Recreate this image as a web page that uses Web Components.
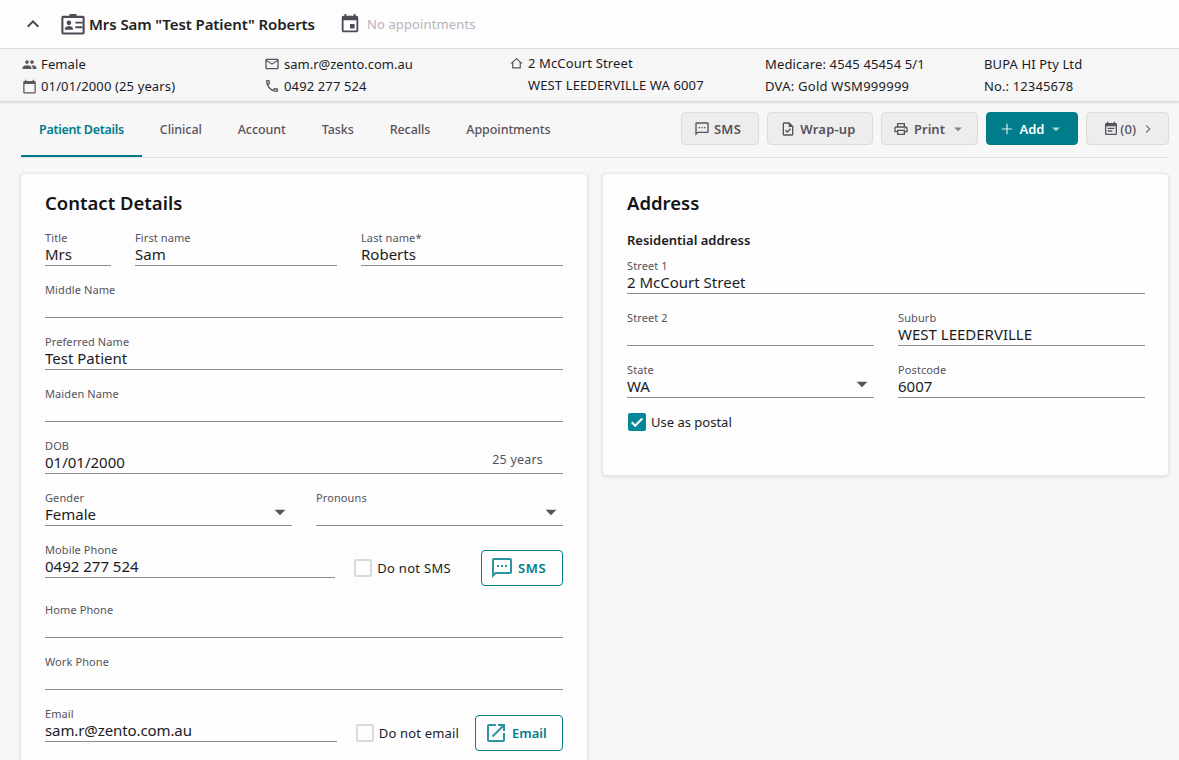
<!DOCTYPE html>
<html><head><meta charset="utf-8"><title>Patient</title>
<style>
html,body{margin:0;height:760px;overflow:hidden;background:#f7f7f7;color:#1b1b1f;font:13px "Noto Sans",sans-serif}
</style></head><body>
<patient-page></patient-page>
<script>
const P={
up:'M12 8l-6 6 1.41 1.41L12 10.83l4.59 4.58L18 14z',
event:'M17 12h-5v5h5v-5zM16 1v2H8V1H6v2H5c-1.11 0-1.99.9-1.99 2L3 19c0 1.1.89 2 2 2h14c1.1 0 2-.9 2-2V5c0-1.1-.9-2-2-2h-1V1h-2zm3 18H5V8h14v11z',
people:'M16 11c1.66 0 2.99-1.34 2.99-3S17.66 5 16 5c-1.66 0-3 1.34-3 3s1.34 3 3 3zm-8 0c1.66 0 2.99-1.34 2.99-3S9.66 5 8 5C6.34 5 5 6.34 5 8s1.34 3 3 3zm0 2c-2.33 0-7 1.17-7 3.5V19h14v-2.5c0-2.33-4.67-3.5-7-3.5zm8 0c-.29 0-.62.02-.97.05 1.16.84 1.97 1.97 1.97 3.45V19h6v-2.5c0-2.33-4.67-3.5-7-3.5z',
cal:'M20 3h-1V1h-2v2H7V1H5v2H4c-1.1 0-2 .9-2 2v16c0 1.1.9 2 2 2h16c1.1 0 2-.9 2-2V5c0-1.1-.9-2-2-2zm0 18H4V8h16v13z',
mail:'M20 4H4c-1.1 0-1.99.9-1.99 2L2 18c0 1.1.9 2 2 2h16c1.1 0 2-.9 2-2V6c0-1.1-.9-2-2-2zm0 14H4V8l8 5 8-5v10zm-8-7L4 6h16l-8 5z',
phone:'M6.54 5c.06.89.21 1.76.45 2.59l-1.2 1.2c-.41-1.2-.67-2.47-.76-3.79h1.51m9.86 12.02c.85.24 1.72.39 2.6.45v1.49c-1.32-.09-2.59-.35-3.8-.75l1.2-1.19M7.5 3H4c-.55 0-1 .45-1 1 0 9.39 7.61 17 17 17 .55 0 1-.45 1-1v-3.49c0-.55-.45-1-1-1-1.24 0-2.45-.2-3.57-.57-.1-.04-.21-.05-.31-.05-.26 0-.51.1-.71.29l-2.2 2.2c-2.83-1.45-5.15-3.76-6.59-6.59l2.2-2.2c.28-.28.36-.67.25-1.02C8.7 6.45 8.5 5.25 8.5 4c0-.55-.45-1-1-1z',
home:'M12 5.69l5 4.5V18H7v-7.81l5-4.5M12 3L2 12h3v8h14v-8h3L12 3z',
sms:'M20 2H4c-1.1 0-2 .9-2 2v18l4-4h14c1.1 0 2-.9 2-2V4c0-1.1-.9-2-2-2zm0 14H5.17L4 17.17V4h16v12zM7 9h2v2H7zm4 0h2v2h-2zm4 0h2v2h-2z',
task:'M14 2H6c-1.1 0-1.99.9-1.99 2L4 20c0 1.1.89 2 1.99 2H18c1.1 0 2-.9 2-2V8l-6-6zm4 18H6V4h7v5h5v11zm-9.18-6.95L7.4 14.46 10.94 18l5.66-5.66-1.41-1.41-4.24 4.24-2.13-2.12z',
print:'M19 8h-1V3H6v5H5c-1.66 0-3 1.34-3 3v6h4v4h12v-4h4v-6c0-1.66-1.34-3-3-3zM8 5h8v3H8V5zm8 14H8v-4h8v4zm2-4v-2H6v2H4v-4c0-.55.45-1 1-1h14c.55 0 1 .45 1 1v4h-2zm0-3.5a1 1 0 1 0 0-2 1 1 0 0 0 0 2z',
plus:'M19 12.8h-6.200v6.200h-1.600v-6.200H5v-1.600h6.200V5h1.600v6.200H19v1.600z',
note:'M17 10H7v2h10v-2zm2-7h-1V1h-2v2H8V1H6v2H5c-1.11 0-1.99.9-1.99 2L3 19c0 1.1.89 2 2 2h14c1.1 0 2-.9 2-2V5c0-1.1-.9-2-2-2zm0 16H5V8h14v11zm-5-5H7v2h7v-2z',
right:'M10 6L8.59 7.41 13.17 12l-4.58 4.59L10 18l6-6z',
open:'M19 19H5V5h7V3H5c-1.11 0-2 .9-2 2v14c0 1.1.89 2 2 2h14c1.1 0 2-.9 2-2v-7h-2v7zM14 3v2h3.59l-9.83 9.83 1.41 1.41L19 6.41V10h2V3h-7z',
caret:'M7 10l5 5 5-5z',
card:'M9 3.5h6V5h5.5A1.5 1.5 0 0 1 22 6.5v13a1.5 1.5 0 0 1-1.5 1.5h-17A1.5 1.5 0 0 1 2 19.500v-13A1.500 1.500 0 0 1 3.500 5H9zM3.800 6.800v12.400h16.400V6.800zM8.500 9a2 2 0 1 1 0 4 2 2 0 0 1 0-4zM5 17v-1c0-1.300 2.300-2.200 3.500-2.200S12 14.700 12 16v1zM14 10h6v1.600h-6zM14 14h6v1.600h-6z'
};
const ic=(n,s,c)=>`<svg width="${s}" height="${s}" viewBox="0 0 24 24" style="flex:none;display:block" fill="${c||'currentColor'}" fill-rule="evenodd"><path d="${P[n]}"/></svg>`;
const def=(name,css,html)=>customElements.define(name,class extends HTMLElement{
  connectedCallback(){ if(this.shadowRoot)return; const r=this.attachShadow({mode:'open'});
    r.innerHTML=`<style>${css}</style>`+(typeof html==='function'?html(this):html); }
});
const a=(e,k,d='')=>e.getAttribute(k)??d;

def('info-item',`:host{display:flex;align-items:center;height:22px;white-space:nowrap;font-size:13px;letter-spacing:.13px;color:#1b1b1f}
 .i{width:19px;flex:none;color:#5b5660}
 .n{margin-left:-1px;width:20px}
 :host([plain]) .i{display:none}`,
 e=>`<span class="i ${a(e,'nudge')?'n':''}">${e.hasAttribute('icon')?ic(a(e,'icon'),a(e,'isize',15)):''}</span><slot></slot>`);

def('tool-button',`:host{display:inline-flex;align-items:center;justify-content:center;box-sizing:border-box;height:33px;gap:4px;border:1px solid #dcdcdc;border-radius:4px;background:#ededed;color:#57525c;font-size:13px;font-weight:600;white-space:nowrap}
 :host([primary]){background:#007c8a;border-color:#007c8a;color:#fff}
 .c{margin-left:-1px;opacity:.7}
 .h{margin-left:2.5px;opacity:.75}
 .pi{display:block;opacity:var(--icon-opacity,1)}`,
 e=>`${e.hasAttribute('icon')?`<span class="pi">${ic(a(e,'icon'),a(e,'isize',16))}</span>`:''}<slot></slot>${e.hasAttribute('caret')?`<span class="c">${ic('caret',18)}</span>`:''}${e.hasAttribute('chev')?`<span class="h">${ic('right',16)}</span>`:''}`);

def('tab-item',`:host{display:block;padding:0 18px;height:55px;line-height:55px;box-sizing:border-box;font-size:12.5px;font-weight:500;letter-spacing:-.08px;color:#57525c;white-space:nowrap}
 :host([active]){color:#007c8a;border-bottom:2px solid #007c8a;font-weight:600;letter-spacing:-.3px}`,`<slot></slot>`);

def('text-field',`:host{display:block;position:relative;box-sizing:border-box;height:36px;border-bottom:1px solid #8f8f8f;min-width:0}
 .l{font-size:11px;line-height:15px;letter-spacing:.1px;color:#57525c;height:15px;white-space:nowrap}
 .v{font-size:15px;line-height:19px;color:#1b1b1f;white-space:nowrap}
 .s{position:absolute;right:-1px;top:9px;color:#57525c}
 .h{position:absolute;right:20px;bottom:5px;font-size:12.5px;letter-spacing:.2px;color:#57525c}`,
 e=>`<div class="l">${a(e,'label')}</div><div class="v">${a(e,'value')}</div>${e.hasAttribute('select')?`<span class="s">${ic('caret',26)}</span>`:''}${e.hasAttribute('hint')?`<span class="h">${a(e,'hint')}</span>`:''}`);

def('check-box',`:host{display:inline-flex;align-items:center;gap:5px;font-size:13px;color:#1b1b1f;white-space:nowrap}
 .b{box-sizing:border-box;width:18px;height:18px;border:2px solid #dadada;border-radius:2px;background:#fdfdfd;display:block}
 :host([checked]) .b{background:#05879a;border-color:#05879a}
 svg{display:block}`,
 e=>`<span class="b">${e.hasAttribute('checked')?'<svg width="14" height="14" viewBox="0 0 24 24" fill="none" stroke="#fff" stroke-width="3.6"><path d="M3 12.5l6 6L21 6"/></svg>':''}</span><slot></slot>`);

def('outline-button',`:host{display:inline-flex;align-items:center;gap:4px;box-sizing:border-box;height:36px;padding-left:8px;border:1px solid #007c8a;border-radius:4px;color:#007c8a;font-size:13px;font-weight:600;background:#fdfdfd}
 span{color:#2d93a0;display:block}`,
 e=>`<span>${ic(a(e,'icon'),24)}</span><slot></slot>`);

def('form-row',`:host{display:flex;gap:24px;margin-bottom:16px;align-items:flex-start}
 ::slotted(*){flex:1 1 0}`,`<slot></slot>`);

def('form-card',`:host{display:block;box-sizing:border-box;background:#fdfdfd;border:1px solid #e9e9e9;border-radius:4px;box-shadow:0 1px 3px rgba(90,100,110,.18);padding:16px 24px 0}
 h2{margin:0;font-size:18.5px;font-weight:600;line-height:25px;color:#141418;margin-bottom:15px}`,
 e=>`<h2>${a(e,'heading')}</h2><slot></slot>`);

def('patient-header',`:host{display:flex;align-items:center;height:48px;background:#fdfdfd;border-bottom:1px solid #dedede;padding-left:21px}
 .u{color:#4a4650;margin-right:14px}
 .n{font-size:15px;font-weight:600;margin-left:2px;letter-spacing:-.09px;color:#1f1f24;white-space:nowrap}
 .ev{margin-left:24px;color:#4f4a55}
 .na{margin-left:6px;color:#b6b3ba;font-size:13px;letter-spacing:.13px;white-space:nowrap}`,
 `<span class="u">${ic('up',24)}</span><span style="color:#4f4a55">${ic('card',28)}</span><span class="n">Mrs Sam "Test Patient" Roberts</span><span class="ev">${ic('event',22)}</span><span class="na">No appointments</span>`);

def('info-bar',`:host{display:grid;grid-template-columns:243px 244px 256px 219px 1fr;height:53px;box-sizing:border-box;padding:4px 0 0 22px;background:#f6f6f6;border-bottom:1px solid #d6d8da;box-shadow:0 1px 2px rgba(120,130,140,.25);position:relative}`,`<slot></slot>`);

def('tab-bar',`:host{display:flex;align-items:flex-start;height:56px;box-sizing:border-box;border-bottom:1px solid #e2e2e2;margin:0 10px 0 20px}
 .t{display:flex;padding-left:1px}
 .a{margin-left:auto;display:flex;gap:8px;padding-top:10px}`,
 `<div class="t"><slot name="tabs"></slot></div><div class="a"><slot name="actions"></slot></div>`);

def('patient-page',`:host{display:block;height:760px;overflow:hidden}
 .cols{display:grid;grid-template-columns:568px 567px;gap:14px;margin:15px 10px 0 20px;align-items:start}
 .side{display:flex;align-items:center;flex:none!important;margin-top:8px;margin-left:-5px}
 h3{margin:16px 0 9px;font-size:13px;line-height:18px;font-weight:600;color:#1b1b1f}`,
 `<patient-header></patient-header>
 <info-bar>
  <div><info-item icon="people">Female</info-item><info-item icon="cal">01/01/2000 (25 years)</info-item></div>
  <div><info-item icon="mail" isize="16" nudge="1" style="letter-spacing:0">sam.r@zento.com.au</info-item><info-item icon="phone" isize="16" nudge="1">0492 277 524</info-item></div>
  <div style="margin-top:-1px"><info-item icon="home">2 McCourt Street</info-item><info-item>WEST LEEDERVILLE WA 6007</info-item></div>
  <div><info-item plain>Medicare: 4545 45454 5/1</info-item><info-item plain style="letter-spacing:.25px">DVA: Gold WSM999999</info-item></div>
  <div><info-item plain>BUPA HI Pty Ltd</info-item><info-item plain>No.: 12345678</info-item></div>
 </info-bar>
 <tab-bar>
  <tab-item slot="tabs" active>Patient Details</tab-item><tab-item slot="tabs">Clinical</tab-item><tab-item slot="tabs">Account</tab-item><tab-item slot="tabs">Tasks</tab-item><tab-item slot="tabs">Recalls</tab-item><tab-item slot="tabs">Appointments</tab-item>
  <tool-button slot="actions" icon="sms" style="width:78px;padding-right:5px;letter-spacing:.2px">SMS</tool-button>
  <tool-button slot="actions" icon="task" style="width:106px;padding-right:4px;letter-spacing:.2px">Wrap-up</tool-button>
  <tool-button slot="actions" icon="print" caret style="width:97px;gap:5px;padding-left:1px">Print</tool-button>
  <tool-button slot="actions" icon="plus" isize="18" caret primary style="width:92px;gap:3px;padding-right:1px;--icon-opacity:.85">Add</tool-button>
  <tool-button slot="actions" icon="note" chev style="width:83px;gap:1px;padding-left:4px;font-weight:500;letter-spacing:.2px">(0)</tool-button>
 </tab-bar>
 <div class="cols">
  <form-card heading="Contact Details">
   <form-row><text-field label="Title" value="Mrs" style="flex:0 0 66px"></text-field><text-field label="First name" value="Sam"></text-field><text-field label="Last name*" value="Roberts"></text-field></form-row>
   <form-row><text-field label="Middle Name"></text-field></form-row>
   <form-row><text-field label="Preferred Name" value="Test Patient"></text-field></form-row>
   <form-row><text-field label="Maiden Name"></text-field></form-row>
   <form-row><text-field label="DOB" value="01/01/2000" hint="25 years"></text-field></form-row>
   <form-row><text-field label="Gender" value="Female" select></text-field><text-field label="Pronouns" select></text-field></form-row>
   <form-row><text-field label="Mobile Phone" value="0492 277 524"></text-field><div class="side" style="gap:30px"><check-box style="letter-spacing:.3px">Do not SMS</check-box><outline-button icon="sms" style="width:82px;letter-spacing:.6px">SMS</outline-button></div></form-row>
   <form-row><text-field label="Home Phone"></text-field></form-row>
   <form-row><text-field label="Work Phone"></text-field></form-row>
   <form-row><text-field label="Email" value="sam.r@zento.com.au" style="letter-spacing:-.1px"></text-field><div class="side" style="gap:16px;margin-top:9px"><check-box style="letter-spacing:.17px">Do not email</check-box><outline-button icon="open" style="width:88px">Email</outline-button></div></form-row>
  </form-card>
  <form-card heading="Address" style="height:303px;padding-right:23px">
   <h3>Residential address</h3>
   <form-row><text-field label="Street 1" value="2 McCourt Street"></text-field></form-row>
   <form-row><text-field label="Street 2"></text-field><text-field label="Suburb" value="WEST LEEDERVILLE"></text-field></form-row>
   <form-row style="margin-bottom:15px"><text-field label="State" value="WA" select></text-field><text-field label="Postcode" value="6007"></text-field></form-row>
   <check-box checked style="margin-left:1px">Use as postal</check-box>
  </form-card>
 </div>`);
</script>
</body></html>
